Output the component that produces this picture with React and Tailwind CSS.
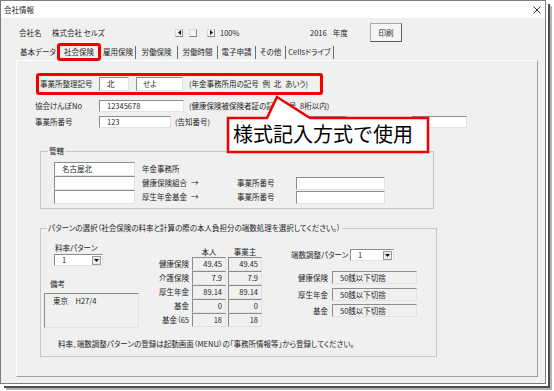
import React from 'react'

const sunken =
  'border border-t-[#8c8c8c] border-l-[#8c8c8c] border-r-[#e2e2e2] border-b-[#e2e2e2]'

function Field({ className = '', children }) {
  return <div className={`${sunken} flex items-center whitespace-nowrap ${className}`}>{children}</div>
}

function Combo({ className = '' }) {
  return (
    <div className={`${sunken} flex items-center justify-between bg-white ${className}`}>
      <span className="pl-[7px]">1</span>
      <span className="mr-[1px] flex h-[9px] w-[9px] items-center justify-center border border-[#9a9a9a] bg-[#ececec]">
        <svg width="5" height="3" viewBox="0 0 5 3">
          <path d="M0 0h5L2.5 3z" fill="#111" />
        </svg>
      </span>
    </div>
  )
}

function ArrowBtn({ dir }) {
  return (
    <span className="flex h-[8px] w-[8px] items-center justify-center border border-[#8a8a8a] border-t-[#d8d8d8] border-l-[#d8d8d8] bg-[#f4f4f4]">
      <svg width="3" height="5" viewBox="0 0 3 5">
        <path d={dir === 'left' ? 'M3 0v5L0 2.5z' : 'M0 0v5l3-2.5z'} fill="#111" />
      </svg>
    </span>
  )
}

const rates = [
  { label: '健康保険', a: '49.45', b: '49.45' },
  { label: '介護保険', a: '7.9', b: '7.9' },
  { label: '厚生年金', a: '89.14', b: '89.14' },
  { label: '基金', a: '0', b: '0' },
  { label: '基金（65', a: '18', b: '18' },
]

export default function App() {
  return (
    <div className="h-[391px] w-[554px] bg-white font-['Noto_Sans_CJK_JP','Liberation_Sans',sans-serif] text-[7.5px] leading-[10px] text-[#1f1f1f] [font-feature-settings:'palt']">
      <div className="h-[384px] w-[546px] border border-[#7c7c7c] bg-[#f0f0f0] shadow-[2px_2px_0_#ffffff,4px_4px_0_#4d4d4d,6px_6px_0_#b5b5b5]">
        {/* title bar */}
        <div className="flex h-[17px] items-center justify-between bg-white pl-[3px] pr-[4px]">
          <span>会社情報</span>
          <svg width="8" height="8" viewBox="0 0 8 8">
            <path d="M0.5 0.5l7 7M7.5 0.5l-7 7" stroke="#333" strokeWidth="1" />
          </svg>
        </div>

        {/* header row */}
        <div className="mt-[5px] flex h-[19px] items-center pl-[18px]">
          <span className="w-[33px]">会社名</span>
          <span className="w-[123px]">株式会社 セルズ</span>
          <div className="flex w-[45px] items-center">
            <ArrowBtn dir="left" />
            <span className="ml-[6px] h-[8px] w-[8px] border border-[#8a8a8a] border-t-[#d8d8d8] border-l-[#d8d8d8] bg-[#f4f4f4]" />
            <span className="ml-[10px]">
              <ArrowBtn dir="right" />
            </span>
          </div>
          <span className="w-[90px]">100%</span>
          <span className="flex w-[60px]">
            <span>2016</span>
            <span className="ml-[6px]">年度</span>
          </span>
          <button
            type="button"
            className="flex h-[19px] w-[32px] items-center justify-center border border-[#a8a8a8] border-r-[#5f5f5f] border-b-[#5f5f5f] bg-[#f6f6f6]"
          >
            印刷
          </button>
        </div>

        {/* tabs */}
        <div className="mt-[1px] flex h-[18px] items-center pl-[18px]">
          <span className="w-[38px] text-center">基本データ</span>
          <span className="relative z-10 flex h-[18px] w-[44px] items-center justify-center rounded-[3px] border-[3px] border-[#f00000]">
            社会保険
          </span>
          <span className="flex h-[13px] w-[35px] items-center justify-center border-r border-[#6b6b6b]">雇用保険</span>
          <span className="flex h-[13px] w-[42px] items-center justify-center border-r border-[#6b6b6b]">労働保険</span>
          <span className="flex h-[13px] w-[40px] items-center justify-center border-r border-[#6b6b6b]">労働時間</span>
          <span className="flex h-[13px] w-[38px] items-center justify-center border-r border-[#6b6b6b]">電子申請</span>
          <span className="flex h-[13px] w-[30px] items-center justify-center border-r border-[#6b6b6b]">その他</span>
          <span className="flex h-[13px] w-[48px] items-center justify-center border-r border-[#6b6b6b]">Cellsドライブ</span>
        </div>

        {/* tab page */}
        <div className="relative ml-[15px] mt-[-1px] h-[317px] w-[522px] border border-t-white border-l-white border-r-[#a0a0a0] border-b-[#a0a0a0]">
          <div className="ml-[19px] mt-[12px] flex h-[22px] w-[287px] items-center rounded-[3px] border-[3px] border-[#f00000] pl-[1px]">
            <span className="w-[59px]">事業所整理記号</span>
            <Field className="h-[14px] w-[30px] bg-white pl-[7px]">北</Field>
            <Field className="ml-[7px] h-[14px] w-[47px] bg-white pl-[6px]">せよ</Field>
            <span className="ml-[6px] whitespace-nowrap">(年金事務所用の記号{'\u2002'}例{'\u2002'}北{'\u2002'}あいう)</span>
          </div>

          <div className="mt-[4px] flex h-[13px] items-center pl-[18px]">
            <span className="w-[64px]">協会けんぽNo</span>
            <Field className="h-[12px] w-[85px] bg-white pl-[7px]">12345678</Field>
            <span className="ml-[5px] whitespace-nowrap">(健康保険被保険者証の記号番号{'\u2002'}8桁以内)</span>
          </div>

          <div className="mt-[4px] flex h-[12px] items-center pl-[18px]">
            <span className="w-[64px]">事業所番号</span>
            <Field className="h-[12px] w-[72px] bg-white pl-[7px]">123</Field>
            <span className="ml-[4px] w-[121px]">(告知番号)</span>
            <Field className="h-[12px] w-[51px] bg-white" />
            <Field className="ml-[65px] h-[12px] w-[55px] bg-white" />
          </div>

          <fieldset className="ml-[23px] mt-[18px] h-[63px] w-[394px] border border-[#c6c6c6]">
            <legend className="ml-[7px] px-[1px] leading-[10px]">管轄</legend>
            <div className="pl-[13px] pt-[6px]">
              <div className="flex h-[14px] items-center">
                <Field className="h-[14px] w-[81px] bg-white pl-[7px]">名古屋北</Field>
                <span className="ml-[7px]">年金事務所</span>
              </div>
              <div className="flex h-[14px] items-center">
                <Field className="h-[14px] w-[81px] bg-white" />
                <span className="ml-[7px] w-[95px]">
                  健康保険組合<span className="ml-[4px]">→</span>
                </span>
                <span className="w-[59px]">事業所番号</span>
                <Field className="h-[13px] w-[89px] bg-white" />
              </div>
              <div className="flex h-[14px] items-center">
                <Field className="h-[14px] w-[81px] bg-white" />
                <span className="ml-[7px] w-[95px]">
                  厚生年金基金<span className="ml-[4px]">→</span>
                </span>
                <span className="w-[59px]">事業所番号</span>
                <Field className="h-[13px] w-[89px] bg-white" />
              </div>
            </div>
          </fieldset>

          <fieldset className="ml-[23px] mt-[14px] h-[134px] w-[397px] border border-[#c6c6c6]">
            <legend className="ml-[6px] px-[1px] leading-[10px]">
              パターンの選択（社会保険の料率と計算の際の本人負担分の端数処理を選択してください。）
            </legend>
            <div className="flex items-start">
              <div className="w-[109px]">
                <div className="ml-[14px] mt-[10px]">料率パターン</div>
                <Combo className="ml-[13px] mt-[1px] h-[12px] w-[49px]" />
                <div className="ml-[9px] mt-[13px]">備考</div>
                <Field className="ml-[3px] mt-[4px] h-[35px] w-[95px] items-start bg-[#f0f0f0] pl-[8px] pt-[2px]">
                  東京　H27/4
                </Field>
              </div>

              <div className="mt-[14px]">
                <div className="flex h-[10px]">
                  <span className="w-[42px]" />
                  <span className="w-[34px] text-center">本人</span>
                  <span className="ml-[2px] w-[34px] text-center">事業主</span>
                </div>
                {rates.map((r) => (
                  <div key={r.label} className="flex h-[14px] items-center">
                    <span className="w-[40px] whitespace-nowrap pr-[1px] text-right">{r.label}</span>
                    <Field className="ml-[2px] h-[14px] w-[34px] justify-end bg-[#f0f0f0] pr-[3px]">{r.a}</Field>
                    <Field className="ml-[2px] h-[14px] w-[34px] justify-end bg-[#f0f0f0] pr-[3px]">{r.b}</Field>
                  </div>
                ))}
              </div>

              <div className="ml-[24px]">
                <div className="mt-[16px] flex h-[12px] items-center">
                  <span className="w-[64px] whitespace-nowrap pl-[5px]">端数調整パターン</span>
                  <Combo className="h-[12px] w-[44px]" />
                </div>
                <div className="mt-[10px] flex h-[13px] items-center">
                  <span className="w-[42px] text-right">健康保険</span>
                  <Field className="ml-[4px] h-[13px] w-[85px] bg-[#f0f0f0] pl-[7px]">50銭以下切捨</Field>
                </div>
                <div className="mt-[4px] flex h-[13px] items-center">
                  <span className="w-[42px] text-right">厚生年金</span>
                  <Field className="ml-[4px] h-[13px] w-[85px] bg-[#f0f0f0] pl-[7px]">50銭以下切捨</Field>
                </div>
                <div className="mt-[3px] flex h-[13px] items-center">
                  <span className="w-[42px] text-right">基金</span>
                  <Field className="ml-[4px] h-[13px] w-[85px] bg-[#f0f0f0] pl-[7px]">50銭以下切捨</Field>
                </div>
              </div>
            </div>
            <div className="ml-[17px] mt-[11px] whitespace-nowrap">
              料率、端数調整パターンの登録は起動画面（MENU）の「事務所情報等」から登録してください。
            </div>
          </fieldset>

          {/* callout */}
          <svg className="absolute left-[209px] top-[33px]" width="204" height="60" viewBox="0 0 204 60">
            <path
              d="M2 24 L41 24 L51 3 L84 24 L202 24 L202 58 L2 58 Z"
              fill="#ffffff"
              stroke="#f00000"
              strokeWidth="2.5"
            />
          </svg>
          <div className="absolute left-[216px] top-[61px] whitespace-nowrap text-[20px] leading-[24px] text-black [font-feature-settings:normal]">
            様式記入方式で使用
          </div>
        </div>
      </div>
    </div>
  )
}
